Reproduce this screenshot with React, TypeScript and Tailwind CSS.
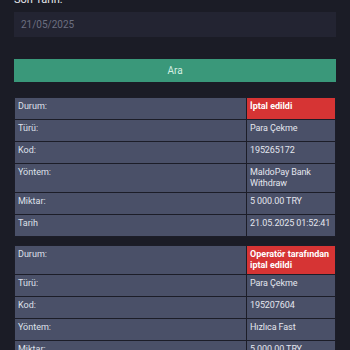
import React from "react";

type Row = { label: string; value: string; status?: boolean };

const txA: Row[] = [
  { label: "Durum:", value: "İptal edildi", status: true },
  { label: "Türü:", value: "Para Çekme" },
  { label: "Kod:", value: "195265172" },
  { label: "Yöntem:", value: "MaldoPay Bank Withdraw" },
  { label: "Miktar:", value: "5 000.00 TRY" },
  { label: "Tarih", value: "21.05.2025 01:52:41" },
];

const txB: Row[] = [
  { label: "Durum:", value: "Operatör tarafından iptal edildi", status: true },
  { label: "Türü:", value: "Para Çekme" },
  { label: "Kod:", value: "195207604" },
  { label: "Yöntem:", value: "Hızlıca Fast" },
  { label: "Miktar:", value: "5 000.00 TRY" },
  { label: "Tarih", value: "21.05.2025 01:40:12" },
];

function TxTable({ rows }: { rows: Row[] }) {
  return (
    <div className="grid grid-cols-[231px_1fr] gap-px bg-[#1c1d28] p-px">
      {rows.map((r) => (
        <React.Fragment key={r.label}>
          <div className="min-h-[21px] bg-[#4a5068] px-[3px] py-[3px] text-[9px] leading-[11px] text-[#dfe1ea]">
            {r.label}
          </div>
          <div
            className={
              r.status
                ? "min-h-[21px] bg-[#d63434] pl-[3px] pr-[2px] py-[3px] text-[9px] font-bold leading-[11px] text-white"
                : "min-h-[21px] bg-[#4a5068] pl-[3px] pr-[2px] py-[3px] text-[9px] leading-[11px] tracking-[-0.1px] text-[#e4e6ee]"
            }
          >
            {r.value}
          </div>
        </React.Fragment>
      ))}
    </div>
  );
}

export default function App() {
  return (
    <div
      className="h-[350px] w-[350px] overflow-hidden bg-[#1b1c26] px-[14px]"
      style={{ fontFamily: "Roboto, 'Noto Sans', sans-serif" }}
    >
      <div className="-mt-[6px] text-[11px] leading-[11px] text-[#e6e6ea]">Son Tarih:</div>
      <div className="mt-[7px] flex h-[25px] items-center bg-[#232432] px-[7px] text-[10px] text-[#6c6f80]">
        21/05/2025
      </div>
      <button
        type="button"
        className="mt-[22px] flex h-[23px] w-full items-center justify-center bg-[#3a987a] text-[10px] text-[#d4eee2]"
      >
        Ara
      </button>
      <div className="mt-[15px]">
        <TxTable rows={txA} />
      </div>
      <div className="mt-[8px]">
        <TxTable rows={txB} />
      </div>
    </div>
  );
}
